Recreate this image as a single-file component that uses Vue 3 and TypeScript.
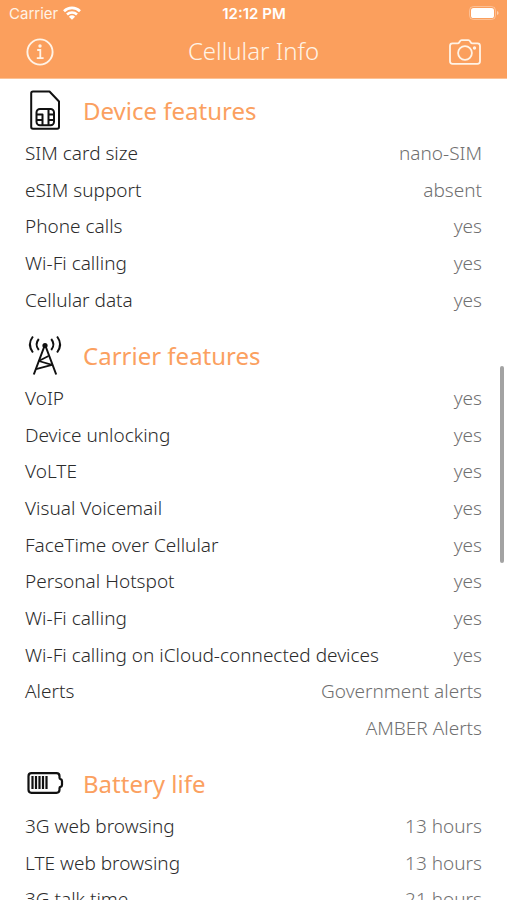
<script setup lang="ts">
interface Feature {
  label: string
  value: string
}

interface Section {
  id: string
  title: string
  rows: Feature[]
}

const sections: Section[] = [
  {
    id: 'device',
    title: 'Device features',
    rows: [
      { label: 'SIM card size', value: 'nano-SIM' },
      { label: 'eSIM support', value: 'absent' },
      { label: 'Phone calls', value: 'yes' },
      { label: 'Wi-Fi calling', value: 'yes' },
      { label: 'Cellular data', value: 'yes' },
    ],
  },
  {
    id: 'carrier',
    title: 'Carrier features',
    rows: [
      { label: 'VoIP', value: 'yes' },
      { label: 'Device unlocking', value: 'yes' },
      { label: 'VoLTE', value: 'yes' },
      { label: 'Visual Voicemail', value: 'yes' },
      { label: 'FaceTime over Cellular', value: 'yes' },
      { label: 'Personal Hotspot', value: 'yes' },
      { label: 'Wi-Fi calling', value: 'yes' },
      { label: 'Wi-Fi calling on iCloud-connected devices', value: 'yes' },
      { label: 'Alerts', value: 'Government alerts' },
      { label: '', value: 'AMBER Alerts' },
    ],
  },
  {
    id: 'battery',
    title: 'Battery life',
    rows: [
      { label: '3G web browsing', value: '13 hours' },
      { label: 'LTE web browsing', value: '13 hours' },
      { label: '3G talk time', value: '21 hours' },
    ],
  },
]
</script>

<template>
  <div class="screen">
    <header class="top">
      <div class="status">
        <div class="carrier">
          <span>Carrier</span>
          <svg width="18" height="14" viewBox="0 0 18 14" aria-hidden="true">
            <g fill="none" stroke="#fff" stroke-width="2.6">
              <path d="M1 5.2a11.4 11.4 0 0 1 16 0" />
              <path d="M4 8.5a7.2 7.2 0 0 1 10 0" />
            </g>
            <path d="M9 13.8L5.9 10.7a4.5 4.5 0 0 1 6.2 0z" fill="#fff" />
          </svg>
        </div>
        <span class="clock">12:12 PM</span>
        <svg class="charge" width="30" height="14" viewBox="0 0 30 14" aria-hidden="true">
          <rect x="0.5" y="0.5" width="26" height="13" rx="4" fill="none" stroke="#fff" stroke-opacity="0.35" />
          <rect x="2" y="2" width="23" height="10" rx="2.6" fill="#fff" />
          <path d="M28 5v4q1.6-.6 1.6-2T28 5z" fill="#fff" fill-opacity="0.5" />
        </svg>
      </div>
      <div class="nav">
        <button type="button" aria-label="Information">
          <svg width="28" height="28" viewBox="0 0 28 28" fill="none" stroke="#fff3e6">
            <circle cx="14" cy="14" r="12.6" stroke-width="1.9" />
            <path d="M11.2 12h3.1v8M10.8 20.2h6.8" stroke-width="1.8" />
            <circle cx="14" cy="8" r="1.7" fill="#fff3e6" stroke="none" />
          </svg>
        </button>
        <h1>Cellular Info</h1>
        <button type="button" aria-label="Camera">
          <svg width="32" height="26" viewBox="0 0 32 26" fill="none" stroke="#fff3e6" stroke-width="1.8" stroke-linejoin="round">
            <path d="M3.5 4.4h5.2q1 0 1.5-.9l.7-1.2q.6-1.1 1.8-1.1h6.6q1.2 0 1.8 1.1l.7 1.2q.5.9 1.5.9h5.2q2.5 0 2.5 2.5v15.4q0 2.5-2.5 2.5h-25q-2.5 0-2.5-2.5V6.9q0-2.5 2.5-2.5z" />
            <circle cx="16" cy="14" r="6.9" />
            <circle cx="25.5" cy="9" r="1.7" fill="#fff3e6" stroke="none" />
          </svg>
        </button>
      </div>
    </header>

    <main class="content">
      <section v-for="section in sections" :key="section.id" :aria-labelledby="section.id">
        <div class="heading">
          <svg v-if="section.id === 'device'" width="40" height="42" viewBox="0 0 40 42" fill="none" stroke="#111" stroke-width="2" stroke-linejoin="round" aria-hidden="true">
            <path d="M8 2.5h16.5L34 12.5V38q0 1.800-1.800 1.800H8q-1.800 0-1.800-1.800V4.300Q6.200 2.500 8 2.500z" />
            <rect x="11.5" y="20" width="17.5" height="16.2" rx="3.5" />
            <path d="M11.5 25.5h6v10.500M11.500 31h6M29 25.500h-5.500M29 31h-5.500M23.500 20v16" />
          </svg>
          <svg v-else-if="section.id === 'carrier'" width="40" height="42" viewBox="0 0 40 42" fill="none" stroke="#111" stroke-width="2" aria-hidden="true">
            <circle cx="20" cy="11.5" r="2.6" fill="#111" stroke="none" />
            <path d="M19.5 12L8.800 40.500M20.500 12L31.200 40.500" />
            <path d="M23.500 22L13.800 27L27 30.800L11 35.200" stroke-width="1.800" stroke-linejoin="bevel" />
            <path d="M13.800 5q-4.500 5.500 0 11M7.900 2.500q-6 8 0 16M26.200 5q4.500 5.500 0 11M32.100 2.500q6 8 0 16" />
          </svg>
          <svg v-else width="40" height="24" viewBox="0 0 40 24" fill="none" stroke="#111" aria-hidden="true">
            <path d="M6.500 2.200h25q3 0 3 3v1.600q0 1 1 1.300 1.500.4 1.500 1.900v4q0 1.500-1.500 1.900-1 .3-1 1.300v1.600q0 3-3 3h-25q-3 0-3-3V5.200q0-3 3-3z" stroke-width="2.200" />
            <path d="M7.500 5v13M11 5v13M14.500 5v13M18 5v13M21.500 5v13" stroke-width="2.200" />
          </svg>
          <h2 :id="section.id">{{ section.title }}</h2>
        </div>
        <table :aria-labelledby="section.id">
          <tbody>
            <tr v-for="(row, index) in section.rows" :key="index">
              <th scope="row">{{ row.label }}</th>
              <td>{{ row.value }}</td>
            </tr>
          </tbody>
        </table>
      </section>
      <div class="scroll-thumb" aria-hidden="true"></div>
    </main>
  </div>
</template>

<style>
body {
  margin: 0;
  background: #fff;
}
</style>

<style scoped>
.screen {
  display: flex;
  flex-direction: column;
  height: 100vh;
  overflow: hidden;
  font-family: "Noto Sans", "Open Sans", sans-serif;
  font-weight: 300;
}

.top {
  flex: none;
  background: #fb9f5d;
  border-bottom: 1px solid #fcc295;
  color: #fff3e6;
}

.status {
  display: grid;
  grid-template-columns: 1fr auto 1fr;
  align-items: center;
  height: 26px;
  padding: 0 8px 0 9px;
  font-family: Inter, Roboto, sans-serif;
  font-size: 15px;
  font-weight: 400;
}

.carrier {
  display: flex;
  align-items: center;
  gap: 5px;
}

.clock {
  color: #fff;
  font-weight: 600;
}

.charge {
  justify-self: end;
}

.nav {
  display: grid;
  grid-template-columns: 1fr auto 1fr;
  align-items: center;
  height: 52px;
  padding: 0 26px;
}

.nav button {
  display: flex;
  justify-self: start;
  padding: 0;
  border: 0;
  background: none;
  cursor: pointer;
}

.nav button:last-child {
  justify-self: end;
}

h1 {
  margin: 0;
  padding-bottom: 2px;
  font-size: 24px;
  font-weight: 300;
  line-height: 48px;
}

.content {
  position: relative;
  flex: 1;
  min-height: 0;
  overflow: hidden;
  padding: 7px 25px 0;
}

section + section {
  margin-top: 13px;
}

.heading {
  display: flex;
  align-items: center;
  gap: 18px;
  height: 48px;
}

h2 {
  margin: 0;
  color: #fba060;
  font-size: 24px;
  font-weight: 400;
}

table {
  display: block;
  font-size: 19px;
  line-height: 26px;
}

tbody {
  display: block;
}

tr {
  display: flex;
  align-items: center;
  justify-content: space-between;
  height: 37px;
}

tr:nth-child(3n) {
  height: 36px;
}

th,
td {
  padding: 0;
  font-weight: 300;
}

th {
  color: #2b2b2b;
  text-align: left;
}

td {
  color: #707070;
  text-align: right;
}

.scroll-thumb {
  position: absolute;
  top: 35%;
  right: 3px;
  width: 4px;
  height: 24%;
  border-radius: 2px;
  background: #a3a3a3;
}
</style>
